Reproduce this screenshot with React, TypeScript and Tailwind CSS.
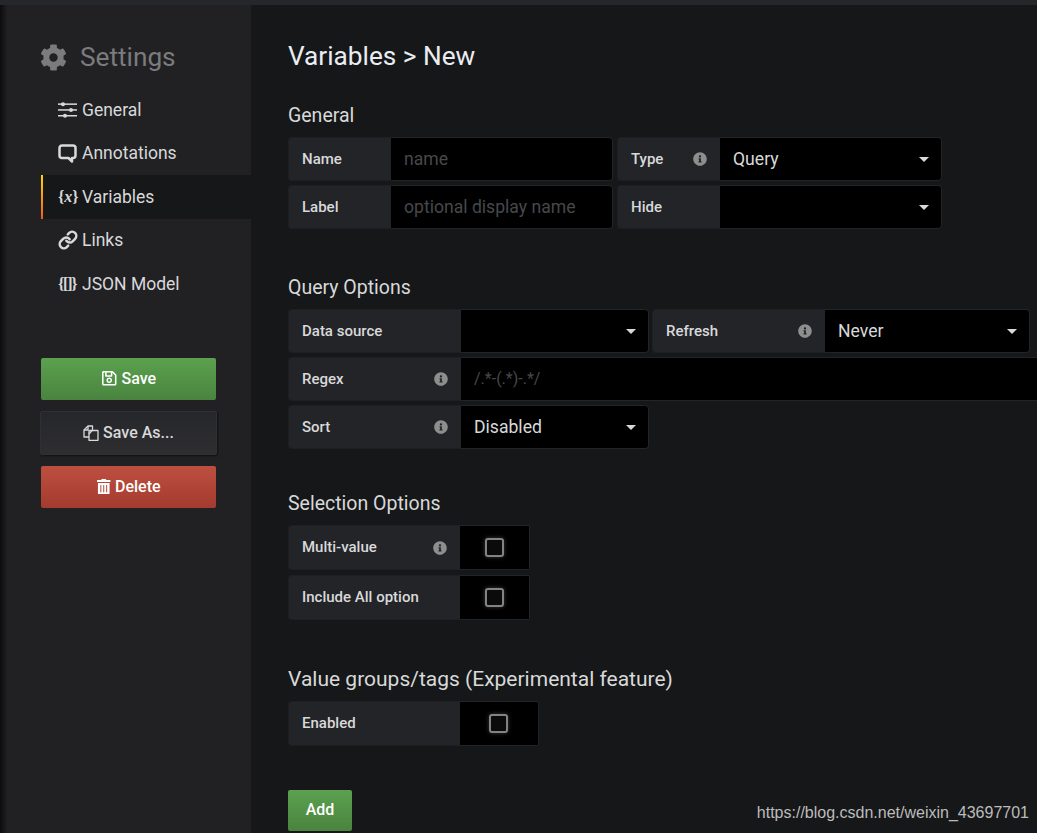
import React from "react";
import { FaCog, FaRegSave, FaTrashAlt, FaInfoCircle } from "react-icons/fa";
import { Link as LinkIcon } from "lucide-react";

function Label({ w, children, info }: { w: string; children: React.ReactNode; info?: boolean }) {
  return (
    <div className={`${w} h-full shrink-0 flex items-center justify-between pl-[13px] pr-[13px] bg-[#232428] rounded-l-[4px] border border-r-0 border-[#1e1f23] text-[15px] font-medium text-[#d8d9da]`}>
      <span>{children}</span>
      {info && <FaInfoCircle className="text-[#8e8e8e] text-[14px]" />}
    </div>
  );
}

function Select({ w, value }: { w: string; value?: string }) {
  return (
    <div className={`${w} h-full shrink-0 flex items-center justify-between pl-[13px] pr-[12px] bg-black rounded-r-[4px] border border-l-0 border-[#232428] text-[17.6px] text-[#d8d9da]`}>
      <span>{value}</span>
      <span className="w-0 h-0 border-l-[5px] border-r-[5px] border-t-[5px] border-l-transparent border-r-transparent border-t-[#d8d9da]" />
    </div>
  );
}

function Input({ w, placeholder, small }: { w: string; placeholder: string; small?: boolean }) {
  return (
    <div className={`${w} h-full shrink-0 flex items-center pl-[13px] bg-black rounded-r-[4px] border border-l-0 border-[#232428] text-[#47484b] ${small ? "text-[16px]" : "text-[17.6px]"}`}>
      {placeholder}
    </div>
  );
}

function Check({ w }: { w: string }) {
  return (
    <div className={`${w} pr-[1px] h-full shrink-0 flex items-center justify-center bg-black rounded-r-[2px] border border-l-0 border-[#232428]`}>
      <span className="w-[19px] h-[19px] rounded-[3px] border-2 border-[#838383] bg-[#0b0b0c] shadow-[0_0_4px_rgba(200,200,200,0.3)]" />
    </div>
  );
}

function Row({ children, h = "h-[44px]" }: { children: React.ReactNode; h?: string }) {
  return <div className={`flex ${h} items-center`}>{children}</div>;
}

function NavItem({ icon, label, active }: { icon: React.ReactNode; label: string; active?: boolean }) {
  return (
    <div className={`relative flex items-center h-[43.5px] pl-[17px] text-[17.5px] text-[#d8d9da] ${active ? "bg-[#161719]" : ""}`}>
      {active && <span className="absolute left-0 top-0 bottom-0 w-[2px] bg-gradient-to-b from-[#ffd500] to-[#eb5a1c]" />}
      <span className="w-[24px] shrink-0 flex items-center text-[#d8d9da]">{icon}</span>
      <span>{label}</span>
    </div>
  );
}

function Heading({ children, className }: { children: React.ReactNode; className: string }) {
  return <div className={`leading-[24px] text-[#d8d9da] ${className}`}>{children}</div>;
}

const SlidersIcon = (
  <svg width="19" height="16" viewBox="0 0 19 16" fill="#d8d9da">
    <rect x="0" y="1.4" width="19" height="1.5" />
    <rect x="0" y="7.2" width="19" height="1.5" />
    <rect x="0" y="13" width="19" height="1.5" />
    <circle cx="5" cy="2.2" r="2" />
    <circle cx="13" cy="8" r="2" />
    <circle cx="7" cy="13.8" r="2" />
  </svg>
);

const CommentIcon = (
  <svg width="19" height="19" viewBox="0 0 19 19" fill="none" stroke="#d8d9da" strokeWidth="2.5">
    <path d="M4 1.5h11a2.5 2.5 0 0 1 2.5 2.5v7.5a2.5 2.5 0 0 1-2.5 2.5h-1v3.5L10.5 14H4a2.5 2.5 0 0 1-2.5-2.5V4A2.5 2.5 0 0 1 4 1.5z" strokeLinejoin="round" />
  </svg>
);

const CopyIcon = (
  <svg width="16" height="16" viewBox="0 0 16 16" fill="none" stroke="#d8d9da" strokeWidth="1.3" strokeLinejoin="round">
    <path d="M9.5 5V1H5L1 5v7h5" />
    <path d="M5 1v4H1" />
    <path d="M6 5.5h5l4 0V15.3H6z" />
    <path d="M6 9l3-3.5" />
  </svg>
);

export default function App() {
  return (
    <div className="relative w-[1037px] h-[833px] overflow-hidden flex flex-col bg-[#161719] font-['Roboto',sans-serif]">
      <div className="h-[5px] shrink-0 bg-[#26272a]" />
      <div className="flex flex-1 min-h-0">
        <aside className="w-[251px] shrink-0 bg-gradient-to-r from-[#0c0c0d] from-0% via-[#212124] via-[3%] to-[#212124] pl-[41px]">
          <div className="flex items-center h-[32px] mt-[36px] -ml-[1px] text-[#7b7b7e]">
            <FaCog className="text-[27px]" />
            <span className="ml-[13px] text-[26.2px] leading-none">Settings</span>
          </div>
          <nav className="mt-[15px]">
            <NavItem label="General" icon={SlidersIcon} />
            <NavItem label="Annotations" icon={CommentIcon} />
            <NavItem
              active
              label="Variables"
              icon={<span className="text-[16px] font-bold leading-none font-['Liberation_Serif',serif]">{"{"}<i>x</i>{"}"}</span>}
            />
            <NavItem label="Links" icon={<LinkIcon size={20} strokeWidth={3} />} />
            <NavItem label="JSON Model" icon={<span className="text-[16px] font-bold leading-none tracking-[-1.2px] font-['Liberation_Serif',serif]">{"{[]}"}</span>} />
          </nav>
          <div className="w-[175px] mt-[52px] flex flex-col">
            <button className="h-[42px] rounded-[2px] bg-gradient-to-b from-[#5ba14f] to-[#4a843f] text-white text-[16px] font-medium flex items-center justify-center gap-[4px]">
              <FaRegSave className="text-[16.5px]" />Save
            </button>
            <button className="h-[44px] mt-[11px] -ml-[1px] w-[177px] rounded-[2px] bg-gradient-to-b from-[#26272a] to-[#2e2e31] border border-[#2f3033] shadow-[1px_1px_2px_rgba(0,0,0,0.5)] text-[#d8d9da] text-[16px] font-medium flex items-center justify-center gap-[4px]">
              {CopyIcon}Save As...
            </button>
            <button className="h-[42px] mt-[11px] rounded-[2px] bg-gradient-to-b from-[#bd4f40] to-[#a43b2e] text-white text-[16px] font-medium flex items-center justify-center gap-[3px]">
              <FaTrashAlt className="text-[15.5px]" />Delete
            </button>
          </div>
        </aside>
        <main className="flex-1 min-w-0 pl-[37px]">
          <h1 className="mt-[35px] text-[26.2px] leading-[32px] text-[#e9edf2]">Variables &gt; New</h1>
          <Heading className="mt-[32px] text-[19.5px]">General</Heading>
          <div className="mt-[9px] flex flex-col gap-[4px]">
            <Row>
              <Label w="w-[103px]">Name</Label>
              <Input w="w-[222px]" placeholder="name" />
              <div className="w-[4px]" />
              <Label w="w-[103px]" info>Type</Label>
              <Select w="w-[222px]" value="Query" />
            </Row>
            <Row>
              <Label w="w-[103px]">Label</Label>
              <Input w="w-[222px]" placeholder="optional display name" />
              <div className="w-[4px]" />
              <Label w="w-[103px]">Hide</Label>
              <Select w="w-[222px]" />
            </Row>
          </div>
          <Heading className="mt-[47px] text-[19.5px]">Query Options</Heading>
          <div className="mt-[9px] flex flex-col gap-[4px]">
            <Row>
              <Label w="w-[173px]">Data source</Label>
              <Select w="w-[188px]" />
              <div className="w-[3px]" />
              <Label w="w-[173px]" info>Refresh</Label>
              <Select w="w-[205px]" value="Never" />
            </Row>
            <Row>
              <Label w="w-[173px]" info>Regex</Label>
              <Input w="w-[600px]" placeholder="/.*-(.*)-.*/" small />
            </Row>
            <Row>
              <Label w="w-[173px]" info>Sort</Label>
              <Select w="w-[188px]" value="Disabled" />
            </Row>
          </div>
          <Heading className="mt-[43px] text-[19.5px]">Selection Options</Heading>
          <div className="mt-[9px] flex flex-col gap-[5px]">
            <Row h="h-[45px]">
              <Label w="w-[172px]" info>Multi-value</Label>
              <Check w="w-[70px]" />
            </Row>
            <Row h="h-[45px]">
              <Label w="w-[172px]">Include All option</Label>
              <Check w="w-[70px]" />
            </Row>
          </div>
          <Heading className="mt-[47px] text-[21px]">Value groups/tags (Experimental feature)</Heading>
          <div className="mt-[10px]">
            <Row h="h-[45px]">
              <Label w="w-[172px]">Enabled</Label>
              <Check w="w-[79px]" />
            </Row>
          </div>
          <button className="mt-[44px] w-[64px] h-[41px] pb-[2px] rounded-[2px] bg-gradient-to-b from-[#5ba14f] to-[#4a843f] text-white text-[16px] font-medium">Add</button>
        </main>
      </div>
      <span className="absolute right-[8px] bottom-[10px] text-[16px] leading-[20px] text-[#bcbcbc] font-['Liberation_Sans',sans-serif]">https://blog.csdn.net/weixin_43697701</span>
    </div>
  );
}
